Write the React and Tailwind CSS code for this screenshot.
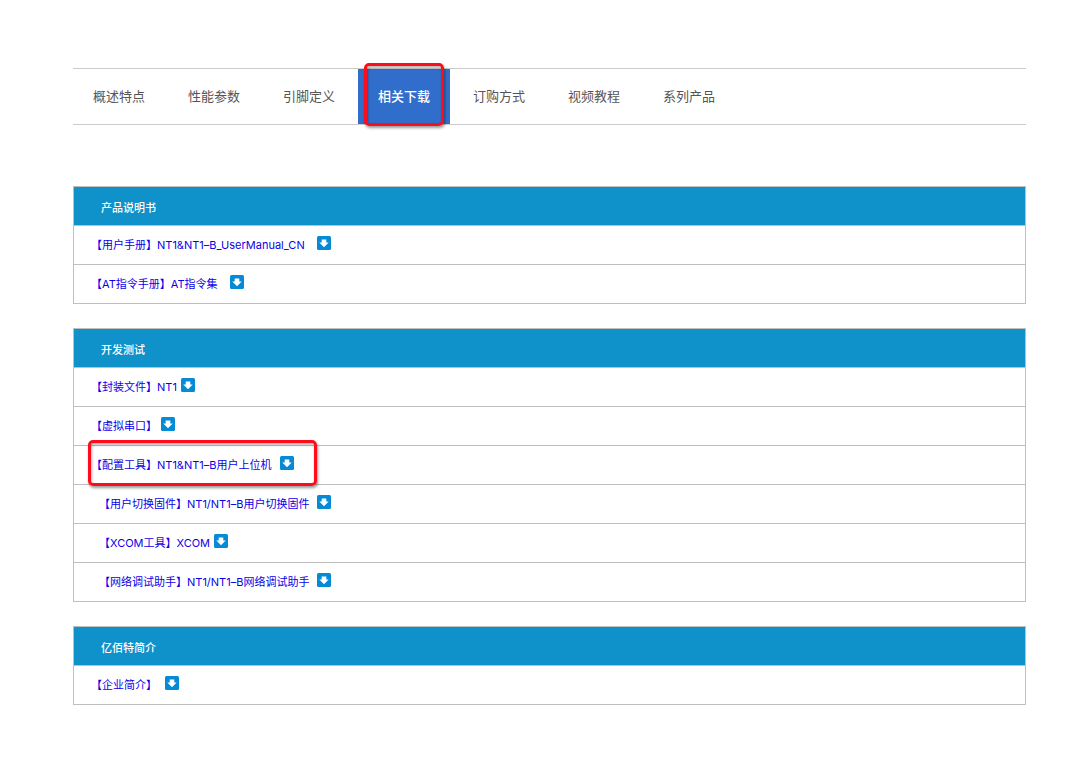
import React from "react";
import clsx from "clsx";

const tabs = [
  { name: "概述特点", id: "overview" },
  { name: "性能参数", id: "params" },
  { name: "引脚定义", id: "pins" },
  { name: "相关下载", id: "downloads", active: true },
  { name: "订购方式", id: "order" },
  { name: "视频教程", id: "videos" },
  { name: "系列产品", id: "series" },
];

const sections = [
  {
    title: "产品说明书",
    files: [
      { name: "【用户手册】NT1&NT1–B_UserManual_CN", gap: "gap-3" },
      { name: "【AT指令手册】AT指令集", gap: "gap-3" },
    ],
  },
  {
    title: "开发测试",
    files: [
      { name: "【封装文件】NT1", gap: "gap-1" },
      { name: "【虚拟串口】", gap: "gap-1" },
      { name: "【配置工具】NT1&NT1–B用户上位机", gap: "gap-2", marked: true },
      { name: "【用户切换固件】NT1/NT1–B用户切换固件", gap: "gap-2", indent: true },
      { name: "【XCOM工具】XCOM", gap: "gap-1", indent: true },
      { name: "【网络调试助手】NT1/NT1–B网络调试助手", gap: "gap-2", indent: true },
    ],
  },
  {
    title: "亿佰特简介",
    files: [{ name: "【企业简介】", gap: "gap-2" }],
  },
];

const Marker = ({ className }) => (
  <span
    className={clsx(
      "pointer-events-none absolute z-10 rounded-[5px] border-3 border-[#fb0d1b] shadow-[1px_2px_3px_rgba(0,0,0,0.4),inset_1px_2px_3px_rgba(0,0,0,0.3)]",
      className
    )}
  />
);

const DownloadIcon = () => (
  <svg width="14" height="14" viewBox="0 0 14 14" className="mb-1 shrink-0" aria-hidden="true">
    <rect width="14" height="14" rx="1.5" fill="#058bd6" />
    <path d="M4.7 3.4h4.6v3.2h2.4L7 11.2 2.3 6.6h2.4z" fill="#fff" />
  </svg>
);

const FileRow = ({ file }) => (
  <tr className="h-[39px]">
    <td
      className={clsx("relative border border-[#bfbfbf] py-0", file.indent ? "pl-[25px]" : "pl-[17px]")}
    >
      <a
        href="#download"
        className={clsx("inline-flex items-center align-middle text-[#0c00e8]", file.gap)}
      >
        <span>{file.name}</span>
        <DownloadIcon />
      </a>
      {file.marked && <Marker className="-top-1.5 -bottom-0.5 left-3.5 w-[229px]" />}
    </td>
  </tr>
);

const DownloadTable = ({ section }) => (
  <table className="w-full border-collapse text-[11px] leading-4">
    <thead>
      <tr className="h-[39px] bg-[#0f91c9] text-white">
        <th scope="col" className="border border-[#bfbfbf] pt-1 pb-0 pl-[27px] text-left font-medium">
          {section.title}
        </th>
      </tr>
    </thead>
    <tbody>
      {section.files.map((file) => (
        <FileRow key={file.name} file={file} />
      ))}
    </tbody>
  </table>
);

const App = () => {
  return (
    <div className="min-h-screen bg-white pt-[68px] pr-[54px] pb-14 pl-[73px] font-[Inter,'Noto_Sans_CJK_SC',sans-serif]">
      <nav className="flex gap-[3px] border-y border-[#cbcbcb] text-[13px] leading-5">
        {tabs.map((tab) => (
          <a
            key={tab.id}
            href={`#${tab.id}`}
            aria-current={tab.active ? "page" : undefined}
            className={clsx(
              "relative px-5 pt-[17px] pb-[18px]",
              tab.active ? "bg-[#316ecb] font-medium text-white" : "text-[#555]"
            )}
          >
            {tab.name}
            {tab.active && <Marker className="-top-1.5 -bottom-0.5 inset-x-1.5" />}
          </a>
        ))}
      </nav>

      <main className="mt-[61px] flex flex-col gap-6">
        {sections.map((section) => (
          <DownloadTable key={section.title} section={section} />
        ))}
      </main>
    </div>
  );
};

export default App;
